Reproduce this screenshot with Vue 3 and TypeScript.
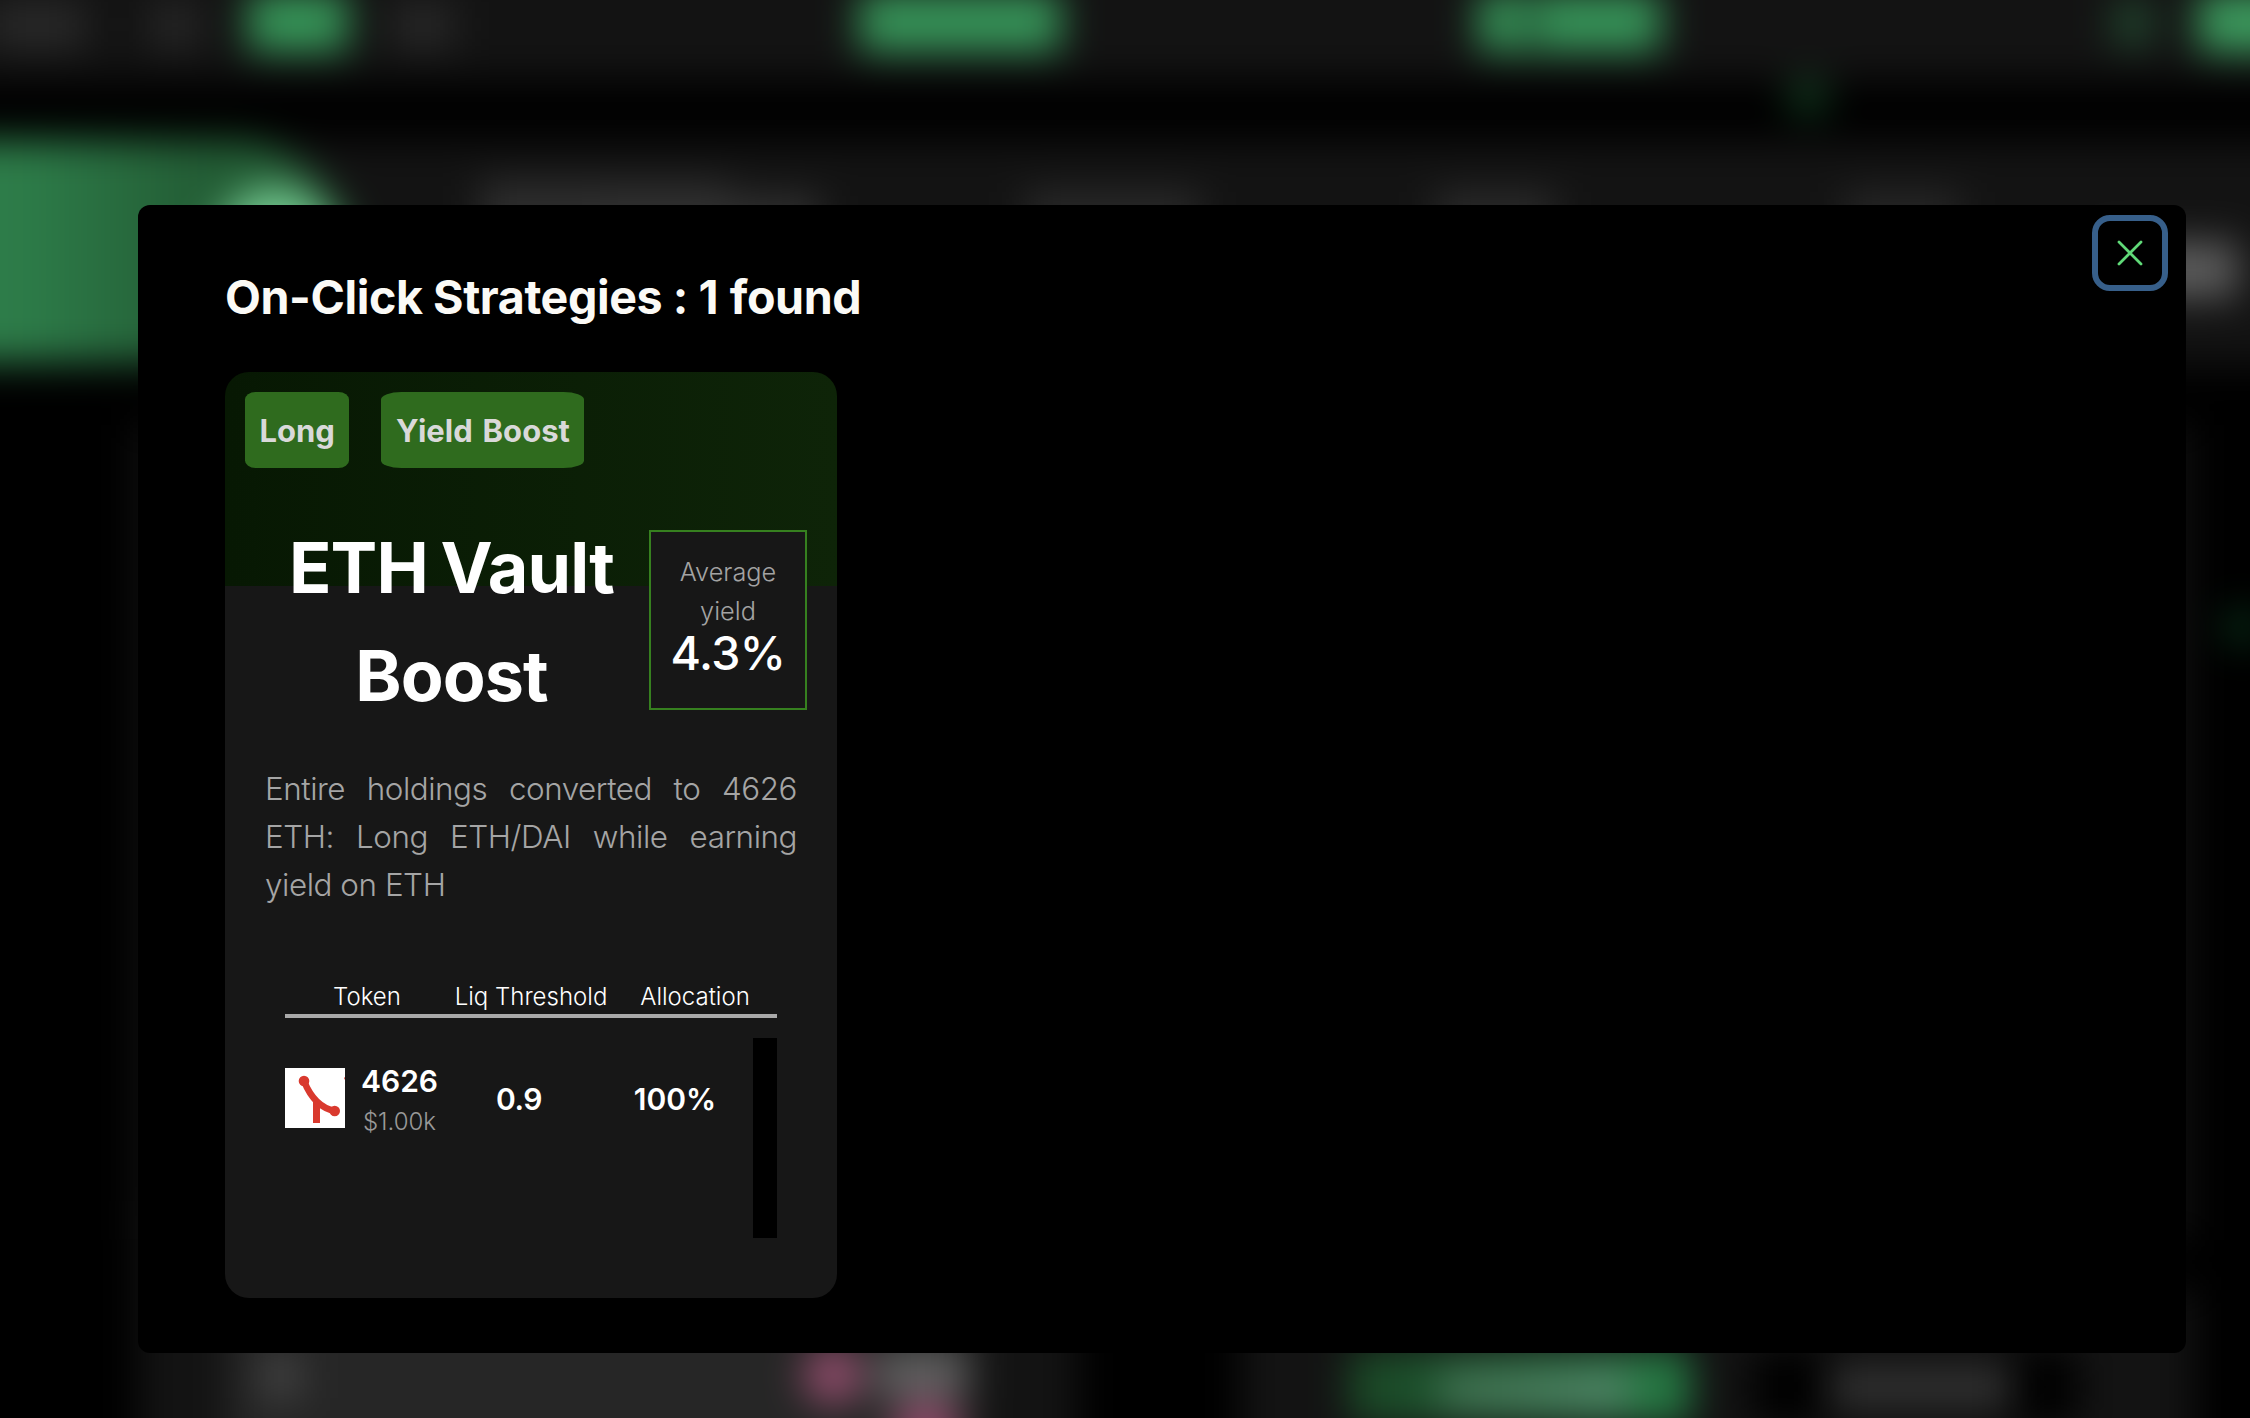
<script setup lang="ts">
interface Position {
  symbol: string
  value: string
  threshold: string
  allocation: string
}

const tags: string[] = ['Long', 'Yield Boost']
const columns: string[] = ['Token', 'Liq Threshold', 'Allocation']
const positions: Position[] = [
  { symbol: '4626', value: '$1.00k', threshold: '0.9', allocation: '100%' },
]
</script>

<template>
  <div class="page">
    <svg class="backdrop" viewBox="0 0 2250 1418" aria-hidden="true">
      <defs>
        <filter id="soft" filterUnits="userSpaceOnUse" x="-100" y="-100" width="2450" height="1618" color-interpolation-filters="sRGB">
          <feGaussianBlur stdDeviation="19" />
        </filter>
        <linearGradient id="hero" gradientUnits="userSpaceOnUse" x1="20" y1="0" x2="200" y2="0">
          <stop offset="0" stop-color="#2d7c49" />
          <stop offset="1" stop-color="#235d35" />
        </linearGradient>
        <linearGradient id="cta" x1="0" y1="0" x2="1" y2="0">
          <stop offset="0" stop-color="#1a4525" />
          <stop offset="1" stop-color="#267c45" />
        </linearGradient>
        <linearGradient id="cta-label" x1="0" y1="0" x2="1" y2="0">
          <stop offset="0" stop-color="#406f50" />
          <stop offset="1" stop-color="#54866a" />
        </linearGradient>
      </defs>
      <g filter="url(#soft)">
        <rect x="-100" y="-100" width="2450" height="180" fill="#131313" />
        <rect x="-100" y="142" width="2450" height="223" fill="#131313" />
        <rect x="135" y="425" width="2055" height="815" fill="#101010" />
        <rect x="138" y="1200" width="940" height="320" fill="#131313" />
        <rect x="1240" y="1290" width="955" height="230" fill="#131313" />

        <rect x="-10" y="2" width="95" height="46" fill="#292929" />
        <rect x="150" y="2" width="50" height="46" fill="#262626" />
        <rect x="248" y="-8" width="100" height="60" fill="#369558" />
        <rect x="392" y="2" width="62" height="46" fill="#272727" />
        <rect x="859" y="-8" width="202" height="60" fill="#369358" />
        <rect x="1478" y="-8" width="183" height="60" fill="#369358" />
        <rect x="1522" y="2" width="14" height="40" fill="#1b3a26" />
        <rect x="2113" y="0" width="40" height="46" fill="#21452e" />
        <rect x="2198" y="-8" width="140" height="60" fill="#3c9b5e" />
        <circle cx="1808" cy="97" r="20" fill="#103a1e" />

        <rect x="480" y="182" width="250" height="60" fill="#2e2e2e" />
        <rect x="600" y="196" width="220" height="44" fill="#313131" />
        <rect x="1025" y="192" width="175" height="44" fill="#2a2a2a" />
        <rect x="1435" y="192" width="120" height="44" fill="#2b2b2b" />
        <rect x="1845" y="192" width="115" height="44" fill="#272727" />
        <rect x="2100" y="242" width="138" height="56" fill="#5c5c5c" />

        <path d="M-100 140H235Q300 140 347 220V362H-100Z" fill="url(#hero)" />
        <circle cx="276" cy="250" r="62" fill="#73c78f" />
        <circle cx="2242" cy="627" r="18" fill="#09331a" />

        <rect x="228" y="1180" width="750" height="340" fill="#262626" />
        <rect x="262" y="1354" width="38" height="44" fill="#444444" />
        <circle cx="833" cy="1375" r="30" fill="#8e4c6a" />
        <rect x="876" y="1350" width="90" height="48" fill="#606060" />
        <circle cx="926" cy="1436" r="36" fill="#8c4666" />

        <rect x="1348" y="1350" width="342" height="74" fill="url(#cta)" />
        <rect x="1440" y="1370" width="190" height="40" fill="url(#cta-label)" />
        <rect x="1752" y="1350" width="326" height="74" rx="12" fill="#000000" />
        <rect x="1828" y="1362" width="184" height="50" fill="#303030" />
      </g>
    </svg>

    <section class="modal" role="dialog" aria-modal="true">
      <button class="close" type="button" aria-label="Close">
        <svg width="28" height="28" viewBox="0 0 28 28" fill="none">
          <path d="M3 3L25 25M25 3L3 25" stroke="#60d978" stroke-width="2.8" stroke-linecap="round" />
        </svg>
      </button>

      <h1 class="heading">On-Click Strategies : <span class="count">{{ positions.length }}</span> found</h1>

      <article class="card">
        <div class="tags">
          <span v-for="tag in tags" :key="tag" class="tag">{{ tag }}</span>
        </div>

        <div class="summary">
          <h2 class="name">ETH Vault Boost</h2>
          <div class="yield">
            <span class="yield-label">Average yield</span>
            <span class="yield-value">4.3%</span>
          </div>
        </div>

        <p class="description">
          Entire holdings converted to 4626 ETH: Long ETH/DAI while earning yield on ETH
        </p>

        <div class="table">
          <div class="table-head">
            <span v-for="column in columns" :key="column">{{ column }}</span>
          </div>
          <div class="table-body">
            <div v-for="row in positions" :key="row.symbol" class="row">
              <svg class="logo" width="60" height="60" viewBox="0 0 60 60">
                <rect width="60" height="60" fill="#ffffff" />
                <path d="M19 13C25 28 34 40 50 43" fill="none" stroke="#d9392e" stroke-width="6.5" />
                <path d="M28 30L35 36V55H28Z" fill="#d9392e" />
                <circle cx="19" cy="13" r="5.3" fill="#d9392e" />
                <circle cx="49.7" cy="43" r="5.3" fill="#d9392e" />
                <path d="M60 9V12L59 10Z" fill="#d9392e" />
              </svg>
              <div class="token">
                <span class="strong">{{ row.symbol }}</span>
                <span class="value">{{ row.value }}</span>
              </div>
              <span class="strong threshold">{{ row.threshold }}</span>
              <span class="strong allocation">{{ row.allocation }}</span>
            </div>
            <div class="scrollbar"></div>
          </div>
        </div>
      </article>
    </section>
  </div>
</template>

<style>
body {
  margin: 0;
  background: #000;
}
</style>

<style scoped>
.page {
  position: relative;
  box-sizing: border-box;
  width: 2250px;
  height: 1418px;
  padding: 205px 64px 65px 138px;
  overflow: hidden;
  background: #000;
  color: #fff;
  font-family: Inter, "Liberation Sans", sans-serif;
}

.backdrop {
  position: absolute;
  inset: 0;
  width: 2250px;
  height: 1418px;
}

.modal {
  position: relative;
  box-sizing: border-box;
  width: 2048px;
  height: 1148px;
  padding: 56px 87px 0;
  border-radius: 12px;
  background: #000;
}

.close {
  position: absolute;
  top: 10px;
  right: 18px;
  display: flex;
  align-items: center;
  justify-content: center;
  box-sizing: border-box;
  width: 76px;
  height: 76px;
  padding: 0;
  border: 6px solid #375f8a;
  border-radius: 18px;
  background: #000;
}

.heading {
  margin: 0 0 39px;
  color: #fbfaf6;
  font-size: 46.6px;
  font-weight: 700;
  line-height: 72px;
  letter-spacing: -0.42px;
  white-space: nowrap;
}

.count {
  margin-right: 1px;
}

.card {
  box-sizing: border-box;
  width: 612px;
  height: 926px;
  padding: 20px 0 0;
  border-radius: 24px;
  background: linear-gradient(90deg, #071803, #0e2408) 0 0 / 100% 214px no-repeat #171717;
}

.tags {
  display: flex;
  gap: 32px;
  padding-left: 20px;
}

.tag {
  padding: 2px 14.5px 0;
  border-radius: 10%;
  background: #2f6b1e;
  color: #d9d9d9;
  font-size: 31px;
  font-weight: 700;
  line-height: 74px;
  word-spacing: 2.5px;
}

.summary {
  display: flex;
  align-items: center;
  margin-top: 46px;
  padding: 0 30px;
}

.name {
  flex: 1;
  margin: 0;
  padding: 0 26px 0 25px;
  font-size: 70px;
  font-weight: 700;
  line-height: 108px;
  letter-spacing: -0.9px;
  word-spacing: -3px;
  text-align: center;
}

.yield {
  display: flex;
  flex: none;
  flex-direction: column;
  box-sizing: border-box;
  width: 158px;
  height: 180px;
  margin-top: -4px;
  padding-top: 20px;
  border: 2px solid #36801f;
  background: #171717;
  text-align: center;
}

.yield-label {
  padding: 0 10px;
  color: #a3a3a3;
  font-size: 25.3px;
  font-weight: 300;
  line-height: 39px;
}

.yield-value {
  margin-top: -1px;
  font-size: 46.5px;
  font-weight: 500;
  line-height: 48px;
  letter-spacing: -0.6px;
}

.description {
  margin: 35px 40px 0;
  color: #a5a5a5;
  font-size: 31.4px;
  font-weight: 300;
  line-height: 48px;
  letter-spacing: -0.45px;
  text-align: justify;
}

.table {
  width: 492px;
  margin: 69px 0 0 60px;
}

.table-head {
  display: grid;
  grid-template-columns: repeat(3, 1fr);
  padding-top: 2px;
  border-bottom: 4px solid #a9a9a9;
  font-size: 24px;
  font-weight: 300;
  line-height: 34px;
  text-align: center;
  white-space: nowrap;
}

.table-body {
  display: flex;
  justify-content: space-between;
  height: 200px;
  margin-top: 20px;
}

.row {
  display: flex;
  align-items: center;
  height: 120px;
}

.logo {
  flex: none;
}

.token {
  display: flex;
  flex-direction: column;
  align-items: center;
  width: 109px;
  padding-top: 2px;
}

.strong {
  font-size: 30px;
  font-weight: 600;
  line-height: 44px;
}

.value {
  color: #999;
  font-size: 24px;
  font-weight: 300;
  line-height: 38px;
}

.token .strong {
  margin-top: 2px;
}

.threshold {
  width: 130px;
  padding-top: 2px;
  letter-spacing: -0.5px;
  text-align: center;
}

.allocation {
  width: 182px;
  padding-top: 2px;
  text-align: center;
}

.scrollbar {
  width: 24px;
  margin-left: -14px;
  background: #000;
}
</style>
